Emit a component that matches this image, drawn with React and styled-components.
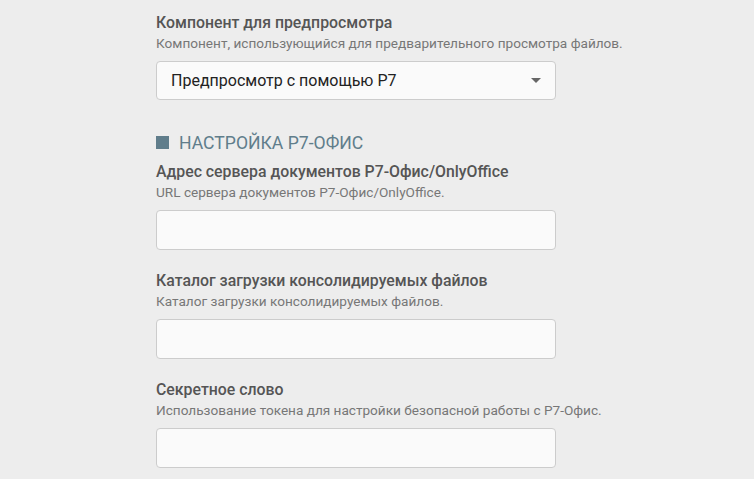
import React from "react";
import styled, { createGlobalStyle } from "styled-components";

const GlobalStyle = createGlobalStyle`
  body {
    margin: 0;
    background: #ededed;
    font-family: Roboto, "Noto Sans", Arial, sans-serif;
  }
`;

const Page = styled.div`
  padding: 12px 0 0 156px;
  min-height: 479px;
  box-sizing: border-box;
`;

const Field = styled.div`
  display: flex;
  flex-direction: column;
  margin-bottom: ${(p) => p.$gap ?? 20}px;
`;

const Label = styled.div`
  font-size: 15.85px;
  line-height: 22px;
  font-weight: 500;
  color: #555;
`;

const Hint = styled.div`
  font-size: 13.6px;
  line-height: 19px;
  color: #777;
  margin-bottom: 8px;
  white-space: nowrap;
`;

const Input = styled.input`
  width: 400px;
  height: 40px;
  box-sizing: border-box;
  border: 1px solid #ccc;
  border-radius: 4px;
  background: #fafafa;
  padding: 0 14px;
  font-family: inherit;
  font-size: 16px;
  outline: none;
`;

const Select = styled.div`
  width: 400px;
  height: 39px;
  box-sizing: border-box;
  border: 1px solid #ccc;
  border-radius: 4px;
  background: #fafafa;
  padding: 0 14px;
  display: flex;
  align-items: center;
  justify-content: space-between;
  font-size: 16px;
  color: #222;
`;

const Caret = styled.span`
  width: 0;
  height: 0;
  border-left: 5px solid transparent;
  border-right: 5px solid transparent;
  border-top: 5px solid #666;
`;

const Section = styled.div`
  display: flex;
  align-items: center;
  gap: 10px;
  margin: 31px 0 6px;
  font-size: 17.6px;
  line-height: 24px;
  color: #607d8b;
  text-transform: uppercase;
`;

const Square = styled.span`
  width: 13px;
  height: 13px;
  margin-bottom: 2px;
  background: #607d8b;
`;

const fields = [
  {
    label: "Адрес сервера документов Р7-Офис/OnlyOffice",
    hint: "URL сервера документов Р7-Офис/OnlyOffice.",
  },
  {
    label: "Каталог загрузки консолидируемых файлов",
    hint: "Каталог загрузки консолидируемых файлов.",
  },
  {
    label: "Секретное слово",
    hint: "Использование токена для настройки безопасной работы с Р7-Офис.",
  },
];

export default function App() {
  return (
    <Page>
      <GlobalStyle />
      <Field $gap={0}>
        <Label>Компонент для предпросмотра</Label>
        <Hint>Компонент, использующийся для предварительного просмотра файлов.</Hint>
        <Select>
          <span>Предпросмотр с помощью Р7</span>
          <Caret />
        </Select>
      </Field>

      <Section>
        <Square />
        Настройка Р7-Офис
      </Section>

      {fields.map((f) => (
        <Field key={f.label}>
          <Label>{f.label}</Label>
          <Hint>{f.hint}</Hint>
          <Input type="text" />
        </Field>
      ))}
    </Page>
  );
}
